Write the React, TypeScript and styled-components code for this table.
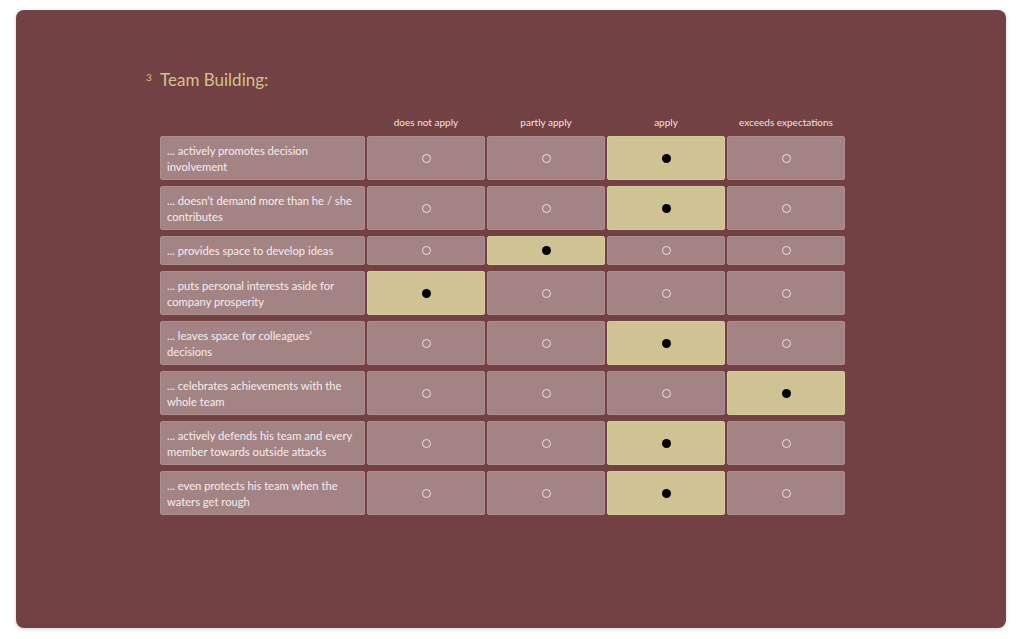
import React from "react";
import styled, { createGlobalStyle } from "styled-components";

const Global = createGlobalStyle`
  html, body { margin: 0; padding: 0; background: #ffffff; }
  body { font-family: Lato, "Open Sans", sans-serif; }
  * { box-sizing: border-box; }
`;

const Page = styled.div`
  padding: 10px 18px 11px 16px;
`;

const Card = styled.section`
  height: 618px;
  background: #724143;
  border-radius: 8px;
  box-shadow: 0 1px 4px rgba(0, 0, 0, 0.18);
  padding: 58px 0 0 130px;
`;

const TitleRow = styled.div`
  display: flex;
  align-items: flex-start;
  height: 24px;
  margin-bottom: 22px;
`;

const Note = styled.span`
  width: 14px;
  margin-top: 3px;
  font-size: 10px;
  line-height: 12px;
  color: #d6c38e;
`;

const Title = styled.h2`
  margin: 0;
  font-size: 17px;
  font-weight: 400;
  line-height: 24px;
  color: #d6c38e;
`;

const Grid = styled.div`
  margin-left: 14px;
  display: grid;
  grid-template-columns: 205px repeat(4, 118px);
  column-gap: 2px;
  row-gap: 6px;
`;

const Head = styled.div`
  height: 16px;
  font-size: 10px;
  line-height: 16px;
  text-align: center;
  color: #f0e4e4;
`;

const Label = styled.div`
  min-height: 29px;
  padding: 5.5px 8px 4.5px 6px;
  font-size: 11.2px;
  line-height: 16px;
  color: #f6eeee;
  background: #a48385;
  border: 1px solid #ad8e90;
  border-radius: 2px;
  display: flex;
  align-items: center;
`;

const Cell = styled.div<{ $on: boolean }>`
  min-height: 29px;
  display: flex;
  align-items: center;
  justify-content: center;
  background: ${(p) => (p.$on ? "#cfc394" : "#a48385")};
  border: 1px solid ${(p) => (p.$on ? "#d6cb9e" : "#ad8e90")};
  border-radius: 2px;
`;

const Open = styled.span`
  width: 9px;
  height: 9px;
  border-radius: 50%;
  border: 1.3px solid #ece0e0;
`;

const Dot = styled.span`
  width: 9px;
  height: 9px;
  border-radius: 50%;
  background: #000;
`;

const heads = ["does not apply", "partly apply", "apply", "exceeds expectations"];

const rows: [string, number][] = [
  ["... actively promotes decision involvement", 2],
  ["... doesn’t demand more than he / she contributes", 2],
  ["... provides space to develop ideas", 1],
  ["... puts personal interests aside for company prosperity", 0],
  ["... leaves space for colleagues’ decisions", 2],
  ["... celebrates achievements with the whole team", 3],
  ["... actively defends his team and every member towards outside attacks", 2],
  ["... even protects his team when the waters get rough", 2],
];

export default function App() {
  return (
    <Page>
      <Global />
      <Card>
        <TitleRow>
          <Note>3</Note>
          <Title>Team Building:</Title>
        </TitleRow>
        <Grid>
          <div />
          {heads.map((h) => (
            <Head key={h}>{h}</Head>
          ))}
          {rows.map(([text, sel]) => (
            <React.Fragment key={text}>
              <Label>{text}</Label>
              {heads.map((h, i) => (
                <Cell key={h} $on={i === sel}>
                  {i === sel ? <Dot /> : <Open />}
                </Cell>
              ))}
            </React.Fragment>
          ))}
        </Grid>
      </Card>
    </Page>
  );
}
